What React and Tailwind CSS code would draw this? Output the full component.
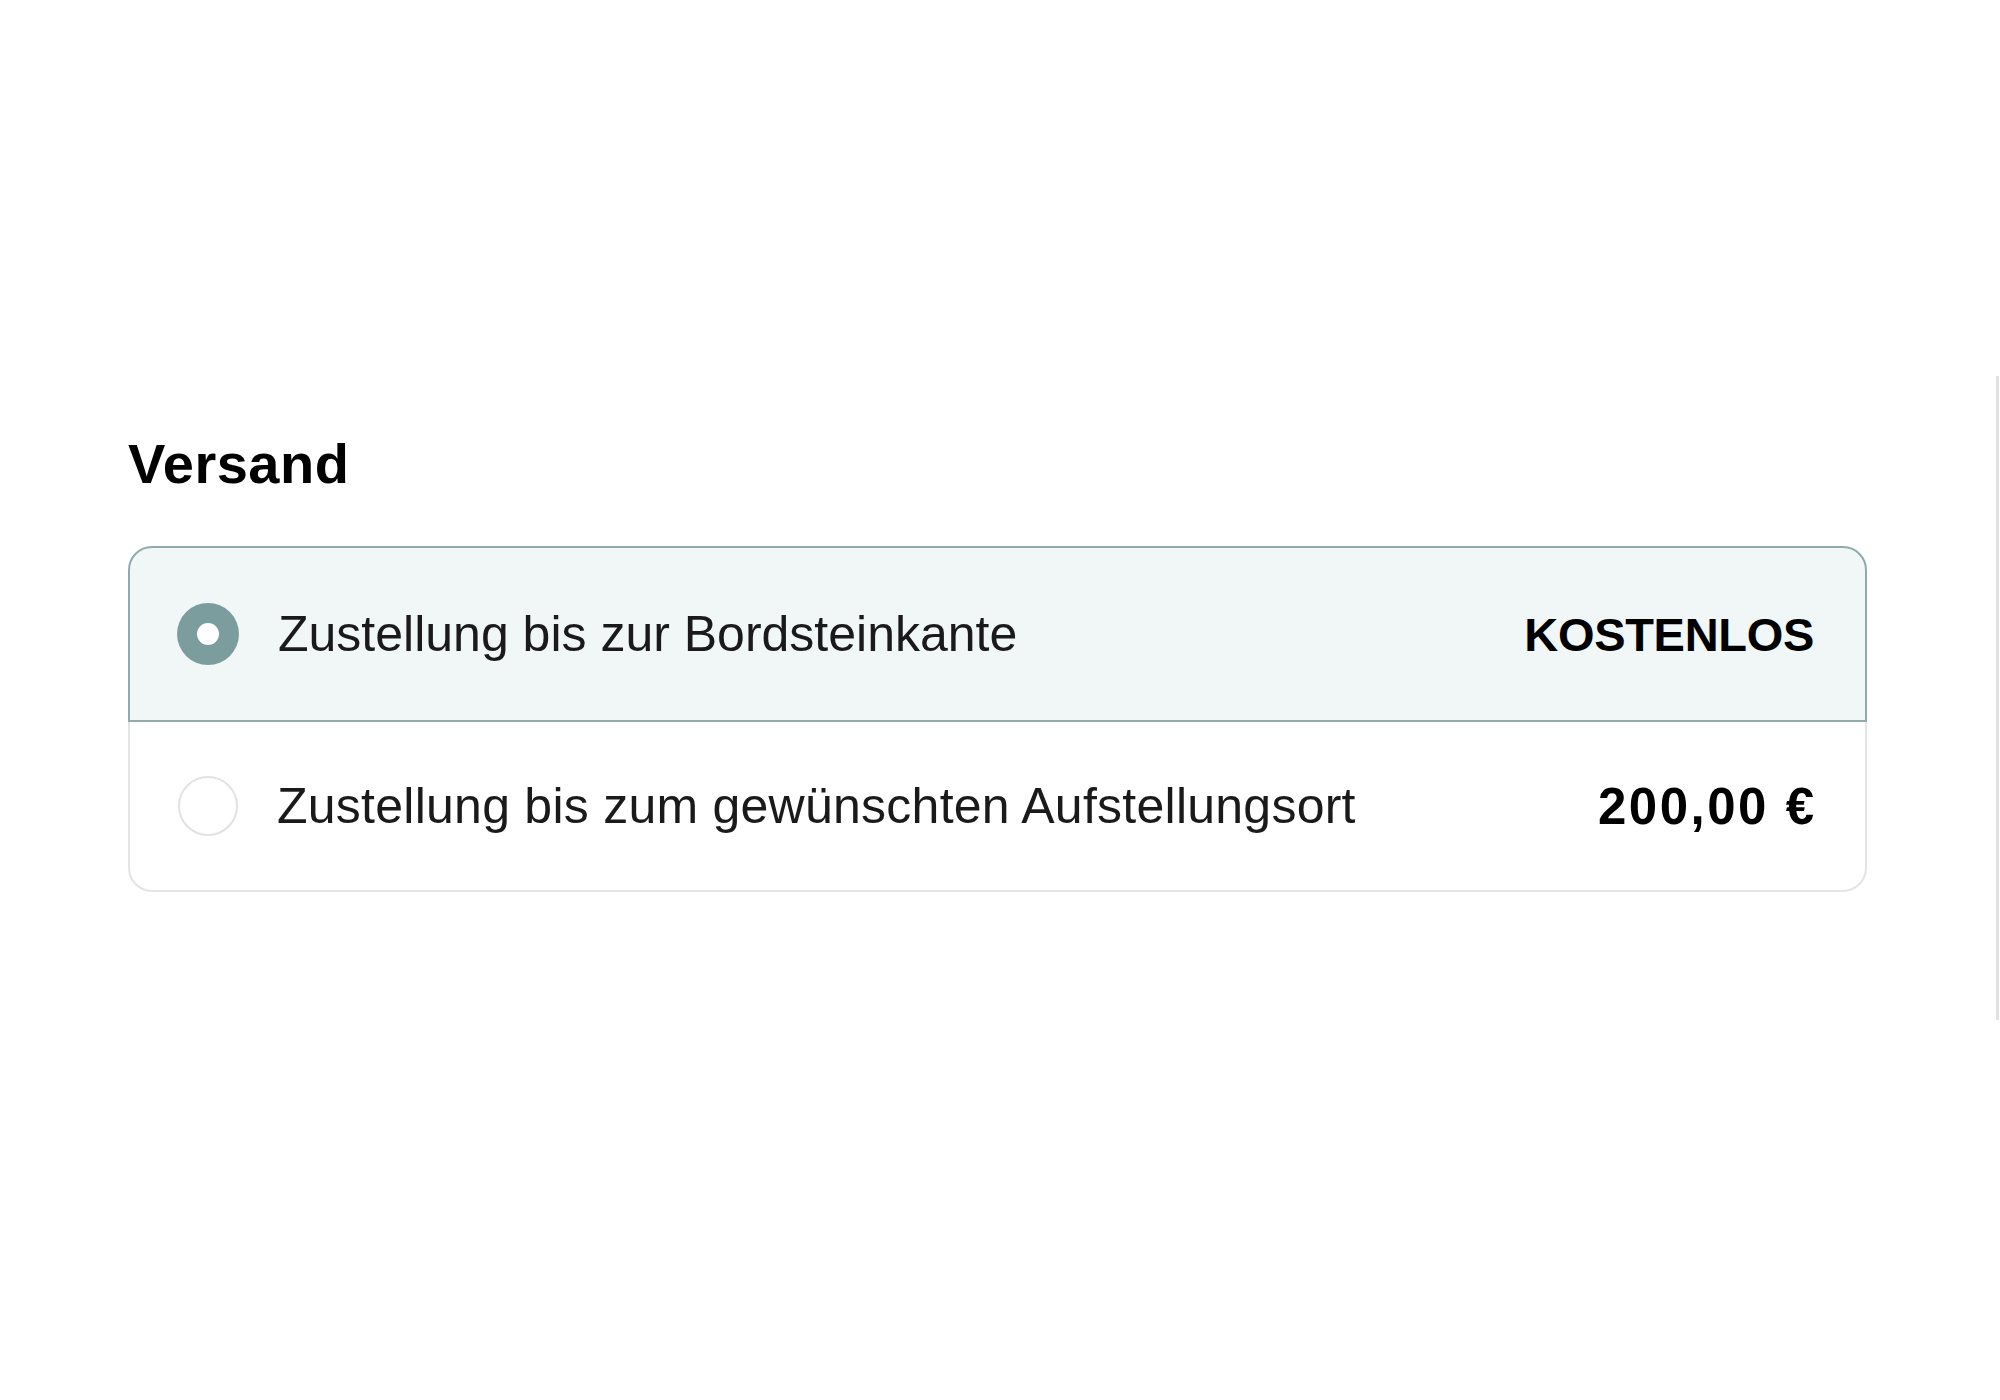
export default function App() {
  return (
    <div className="w-[2000px] h-[1400px] bg-white flex items-start overflow-hidden" style={{ fontFamily: '"Liberation Sans", Arial, sans-serif' }}>
      <div className="w-[1996px] shrink-0 pt-[436px] pl-[128px]">
        <h2 className="text-[56px] leading-none font-bold text-black tracking-[0.5px]">Versand</h2>
        <div className="mt-[54px] w-[1739px] flex flex-col">
          <label className="h-[176px] flex items-center justify-between pl-[47px] pr-[51px] bg-[#f1f6f6] border-2 border-[#8fabac] rounded-t-[24px]">
            <span className="flex items-center gap-[39px]">
              <span className="w-[62px] h-[62px] rounded-full bg-[#7b9d9e] flex items-center justify-center">
                <span className="w-[22px] h-[22px] rounded-full bg-white"></span>
              </span>
              <span className="text-[50px] leading-none text-[#1a1a1a]">Zustellung bis zur Bordsteinkante</span>
            </span>
            <span className="text-[47px] leading-none font-bold text-black tracking-[-0.3px]">KOSTENLOS</span>
          </label>
          <label className="h-[170px] flex items-center justify-between pl-[48px] pr-[51px] bg-white border-2 border-t-0 border-[#e4e4e4] rounded-b-[24px]">
            <span className="flex items-center gap-[39px]">
              <span className="w-[60px] h-[60px] rounded-full border-2 border-[#e2e2e2] bg-white"></span>
              <span className="text-[50px] leading-none text-[#1a1a1a] tracking-[0.25px]">Zustellung bis zum gewünschten Aufstellungsort</span>
            </span>
            <span className="text-[51px] leading-none font-bold text-black tracking-[2.5px] -mr-[2.5px]">200,00 €</span>
          </label>
        </div>
      </div>
      <div className="mt-[376px] h-[644px] border-l-[3px] border-[#e2e2e2]"></div>
    </div>
  );
}
